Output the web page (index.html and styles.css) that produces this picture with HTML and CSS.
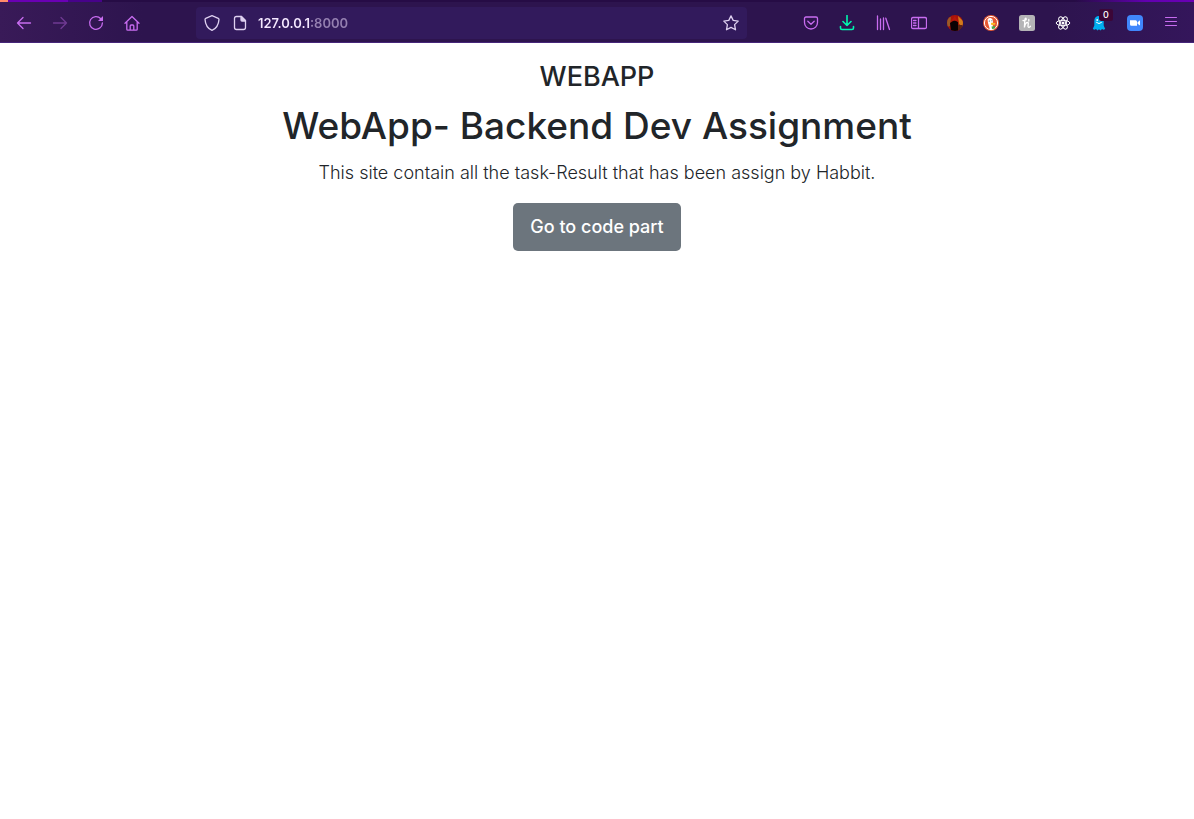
FILE: index.html
```html
<!DOCTYPE html>
<html lang="en">
<head>
<meta charset="utf-8">
<meta name="viewport" content="width=device-width, initial-scale=1">
<title>WebApp</title>
<link rel="stylesheet" href="styles.css">
</head>
<body>
<header class="browser">
  <div class="tab-strip"></div>
  <div class="toolbar">
    <nav class="tools" aria-label="Navigation">
      <button class="tool" type="button" aria-label="Back"><svg class="icon" viewBox="0 0 16 16"><path d="M14.500 8H1.500M7 2.500 1.500 8 7 13.500"/></svg></button>
      <button class="tool" type="button" aria-label="Forward" disabled><svg class="icon" viewBox="0 0 16 16"><path d="M1.500 8h13M9 2.500 14.500 8 9 13.500"/></svg></button>
      <button class="tool" type="button" aria-label="Reload"><svg class="icon" viewBox="0 0 16 16"><path d="M12.800 3.700A6.400 6.400 0 1 0 14.400 8"/><path class="tip" d="M15 1v4.500q0 .500-.500.500H10z"/></svg></button>
      <button class="tool" type="button" aria-label="Home"><svg class="icon" viewBox="0 0 16 16"><path d="M1 8.200 8 1.500l7 6.700M2.800 7v7.200q0 1 1 1h8.400q1 0 1-1V7M6.200 15v-4q0-1 1-1h1.600q1 0 1 1v4"/></svg></button>
    </nav>
    <div class="address">
      <button class="address-tool" type="button" aria-label="Tracking protection"><svg class="icon" viewBox="0 0 16 16"><path d="M8 .700 14.300 3.400q.700.300.700 1C14.600 10 12.500 13.500 8 15.400 3.500 13.500 1.400 10 1 4.400q0-.700.700-1z"/></svg></button>
      <button class="address-tool" type="button" aria-label="Site information"><svg class="icon" viewBox="0 0 16 16"><path d="M9.500 1.500h-5q-2 0-2 2v9q0 2 2 2h7q2 0 2-2V5.500z"/><path class="solid" d="M9 1.500 13.500 6H10q-1 0-1-1z"/></svg></button>
      <input class="url" type="text" aria-label="Address" value="127.0.0.1:8000" spellcheck="false">
      <button class="address-tool" type="button" aria-label="Bookmark"><svg class="icon" viewBox="0 0 16 16"><path d="M8 .900 10.200 5.400 15.200 6.100 11.600 9.600 12.500 14.800 8 12.400 3.500 14.800 4.400 9.600 .800 6.100 5.800 5.400z"/></svg></button>
    </div>
    <div class="tools">
      <button class="tool" type="button" aria-label="Pocket"><svg class="icon" viewBox="0 0 16 16"><path d="M3 2h10q1.500 0 1.500 1.500V7.500A6.500 6.500 0 0 1 1.500 7.500V3.500Q1.500 2 3 2zM4.800 6.300 8 9.300 11.200 6.300"/></svg></button>
      <button class="tool download" type="button" aria-label="Downloads"><svg class="icon" viewBox="0 0 16 16"><path d="M8 .500v10M4 6.500l4 4 4-4M1.500 11.500V13q0 1.500 1.500 1.500h10q1.500 0 1.500-1.500v-1.500"/></svg></button>
      <button class="tool" type="button" aria-label="Library"><svg class="icon" viewBox="0 0 16 16"><path d="M2.500 1v13.500M5.500 4v10.500M8.500 3v11.500M10.800 3.200 14.500 14.500"/></svg></button>
      <button class="tool" type="button" aria-label="Sidebar"><svg class="icon" viewBox="0 0 16 16"><path d="M2 2.500h12q1.500 0 1.500 1.500v8q0 1.500-1.500 1.500H2Q.500 13.500.500 12V4Q.500 2.500 2 2.500zM7.500 2.500v11M2.500 5.500h2.500M2.500 8h2.500M2.500 10.500h2.500"/></svg></button>
      <button class="tool" type="button" aria-label="Account"><svg class="picture" viewBox="0 0 16 16"><defs><clipPath id="round"><circle cx="8" cy="8" r="8"/></clipPath></defs><g clip-path="url(#round)"><path fill="#a91409" d="M0 0h16v16H0z"/><path fill="#9a5a28" d="M0 3l4-1-1 9-3 1z"/><path fill="#d17b1c" d="m11 1 5 5v6l-4-3z"/><path fill="#5b2413" d="M11 10h5v6h-5z"/><path fill="#090204" d="M4 16 3 8l3-2q2-1 5 1v9z"/><path fill="#b7180b" d="m4 6 4-5 3 6-3-2z"/></g></svg></button>
      <button class="tool" type="button" aria-label="DuckDuckGo"><svg class="picture" viewBox="0 0 16 16"><circle cx="8" cy="8" r="8" fill="#e65932"/><circle cx="8" cy="8" r="6.600" fill="#e65932" stroke="#fff"/><path fill="#fff" d="M4.500 4.500Q5 2.500 7.500 3q2.500.500 2.500 4l-.500 2 1 5.300-3.500.200L5 8z"/><path fill="#fdb924" d="m8 7.800 4.500.200-.600 1.700-3.700.200z"/><path fill="#47a84b" d="m8.500 11.500 3.500-.500v2.500L9 14z"/><circle cx="6.300" cy="6" r=".600" fill="#304465"/><circle cx="8.900" cy="5.800" r=".500" fill="#304465"/></svg></button>
      <button class="tool" type="button" aria-label="Honey"><svg class="picture" viewBox="0 0 16 16"><rect width="16" height="16" rx="2.500" fill="#b4b4b6"/><path fill="none" stroke="#fff" stroke-width="1.300" stroke-linecap="round" d="M4 5.500C6 6 8 4.500 7 3.300 5.600 2.300 5.800 7 5.400 12.500 6 9 7.500 7.500 8.500 7.500c1.600 0 .300 2.800.500 4 .200 1.300 1.600 1.200 2.500-.300M9.800 4.500v1.500"/></svg></button>
      <button class="tool" type="button" aria-label="React tools"><svg class="picture" viewBox="0 0 16 16"><g fill="none" stroke="#fff" stroke-width="1"><ellipse cx="8" cy="8" rx="6.800" ry="2.700"/><ellipse cx="8" cy="8" rx="6.800" ry="2.700" transform="rotate(60 8 8)"/><ellipse cx="8" cy="8" rx="6.800" ry="2.700" transform="rotate(120 8 8)"/></g><circle cx="8" cy="8" r="1.500" fill="#fff"/></svg></button>
      <button class="tool" type="button" aria-label="Ghostery, 0 trackers"><svg class="picture" viewBox="0 0 16 16"><path fill="#00aef0" d="M3.300 6C3.300 2.800 5.300 1 8 1s4.700 1.800 4.700 5v4.500l1.500 3.500-1.700.800-1.500-.800-1.500 1.500-1.500-1.300L6.500 15.500 5 14l-1.500.800L1.800 14l1.500-3.500z"/><path fill="none" stroke="#fff" stroke-linecap="round" d="M5.500 7.500q2.500 2.400 5 0"/><circle cx="6.200" cy="5" r=".900" fill="#fff"/><circle cx="9.500" cy="5" r=".900" fill="#fff"/></svg><span class="badge">0</span></button>
      <button class="tool" type="button" aria-label="Zoom"><svg class="picture" viewBox="0 0 16 16"><rect width="16" height="16" rx="4" fill="#4087fc"/><path fill="#fff" d="M3 5.200h5.500q1.500 0 1.500 1.500v4H4.500Q3 10.700 3 9.200zM10.500 7.200 13 5.300v5.300l-2.500-1.900z"/></svg></button>
      <button class="tool" type="button" aria-label="Menu"><svg class="icon menu" viewBox="0 0 16 16"><path d="M2.500 2.500h11M2.500 6.500h11M2.500 10.500h11"/></svg></button>
    </div>
  </div>
</header>
<main class="page">
  <h3 class="brand">WEBAPP</h3>
  <h1 class="title">WebApp- Backend Dev Assignment</h1>
  <p class="lead">This site contain all the task-Result that has been assign by Habbit.</p>
  <a class="cta" href="#code">Go to code part</a>
</main>
</body>
</html>
```
FILE: styles.css
```css
* {
  box-sizing: border-box;
}

body {
  margin: 0;
  background: #fff;
  color: #212529;
  font-family: Inter, "Liberation Sans", sans-serif;
}

button {
  padding: 0;
  border: 0;
  background: none;
  color: inherit;
  font: inherit;
}

.tab-strip {
  height: 2px;
  background: linear-gradient(90deg, #ff8a6a 0 8px, #6a00b4 8px 68px, #47028a 68px 102px, #260c45 102px 90%, #6200b0 96%, #6a00b4);
}

.toolbar {
  display: flex;
  align-items: center;
  gap: 46px;
  height: 41px;
  padding: 0 5px 0 6px;
  border-bottom: 1px solid #46267a;
  background: linear-gradient(90deg, #391a58, #2d144e 12%, #2d144e 88%, #34165b);
  color: #c86cf0;
}

.tools {
  display: flex;
}

.tool {
  position: relative;
  display: grid;
  place-items: center;
  width: 36px;
  height: 36px;
}

.tool:disabled {
  opacity: 0.4;
}

.icon,
.picture {
  display: block;
  width: 16px;
  height: 16px;
}

.icon {
  fill: none;
  stroke: currentColor;
  stroke-width: 1.3;
  stroke-linecap: round;
  stroke-linejoin: round;
}

.menu {
  stroke-width: 1;
}

.solid {
  fill: currentColor;
}

.tip {
  fill: currentColor;
  stroke: none;
}

.download {
  color: #00f5ae;
}

.download .icon {
  stroke-width: 1.6;
}

.badge {
  position: absolute;
  top: 4px;
  right: 4px;
  width: 14px;
  border-radius: 2px;
  background: #3c0637;
  color: #fff;
  font-size: 9px;
  font-weight: 500;
  line-height: 12px;
  text-align: center;
}

.toolbar {
  padding-top: 1px;
}

.address {
  display: flex;
  flex: 1;
  align-items: center;
  gap: 12px;
  min-width: 0;
  height: 32px;
  padding: 0 8px;
  border-radius: 4px;
  background: #321a5c;
  color: #ded0f0;
}

.url {
  flex: 1;
  min-width: 0;
  margin-left: -2px;
  padding: 0;
  border: 0;
  outline: 0;
  background: linear-gradient(90deg, #f4e8ff 53px, #9581b1 53px);
  -webkit-background-clip: text;
  background-clip: text;
  color: transparent;
  font-family: inherit;
  font-size: 13px;
  font-weight: 600;
  line-height: 20px;
}

.page {
  display: flex;
  flex-direction: column;
  align-items: center;
  padding: 17px 16px;
  text-align: center;
}

.brand,
.title,
.lead {
  margin: 0 0 8px;
}

.brand {
  font-size: 27px;
  font-weight: 500;
  line-height: 34px;
}

.title {
  font-size: 37px;
  font-weight: 500;
  line-height: 48px;
}

.lead {
  margin-bottom: 15px;
  font-size: 18px;
  font-weight: 300;
  line-height: 30px;
}

.cta {
  padding: 9px 17px;
  border-radius: 5px;
  background: #6c757d;
  color: #fff;
  font-size: 18px;
  font-weight: 500;
  line-height: 30px;
  text-decoration: none;
}
```
